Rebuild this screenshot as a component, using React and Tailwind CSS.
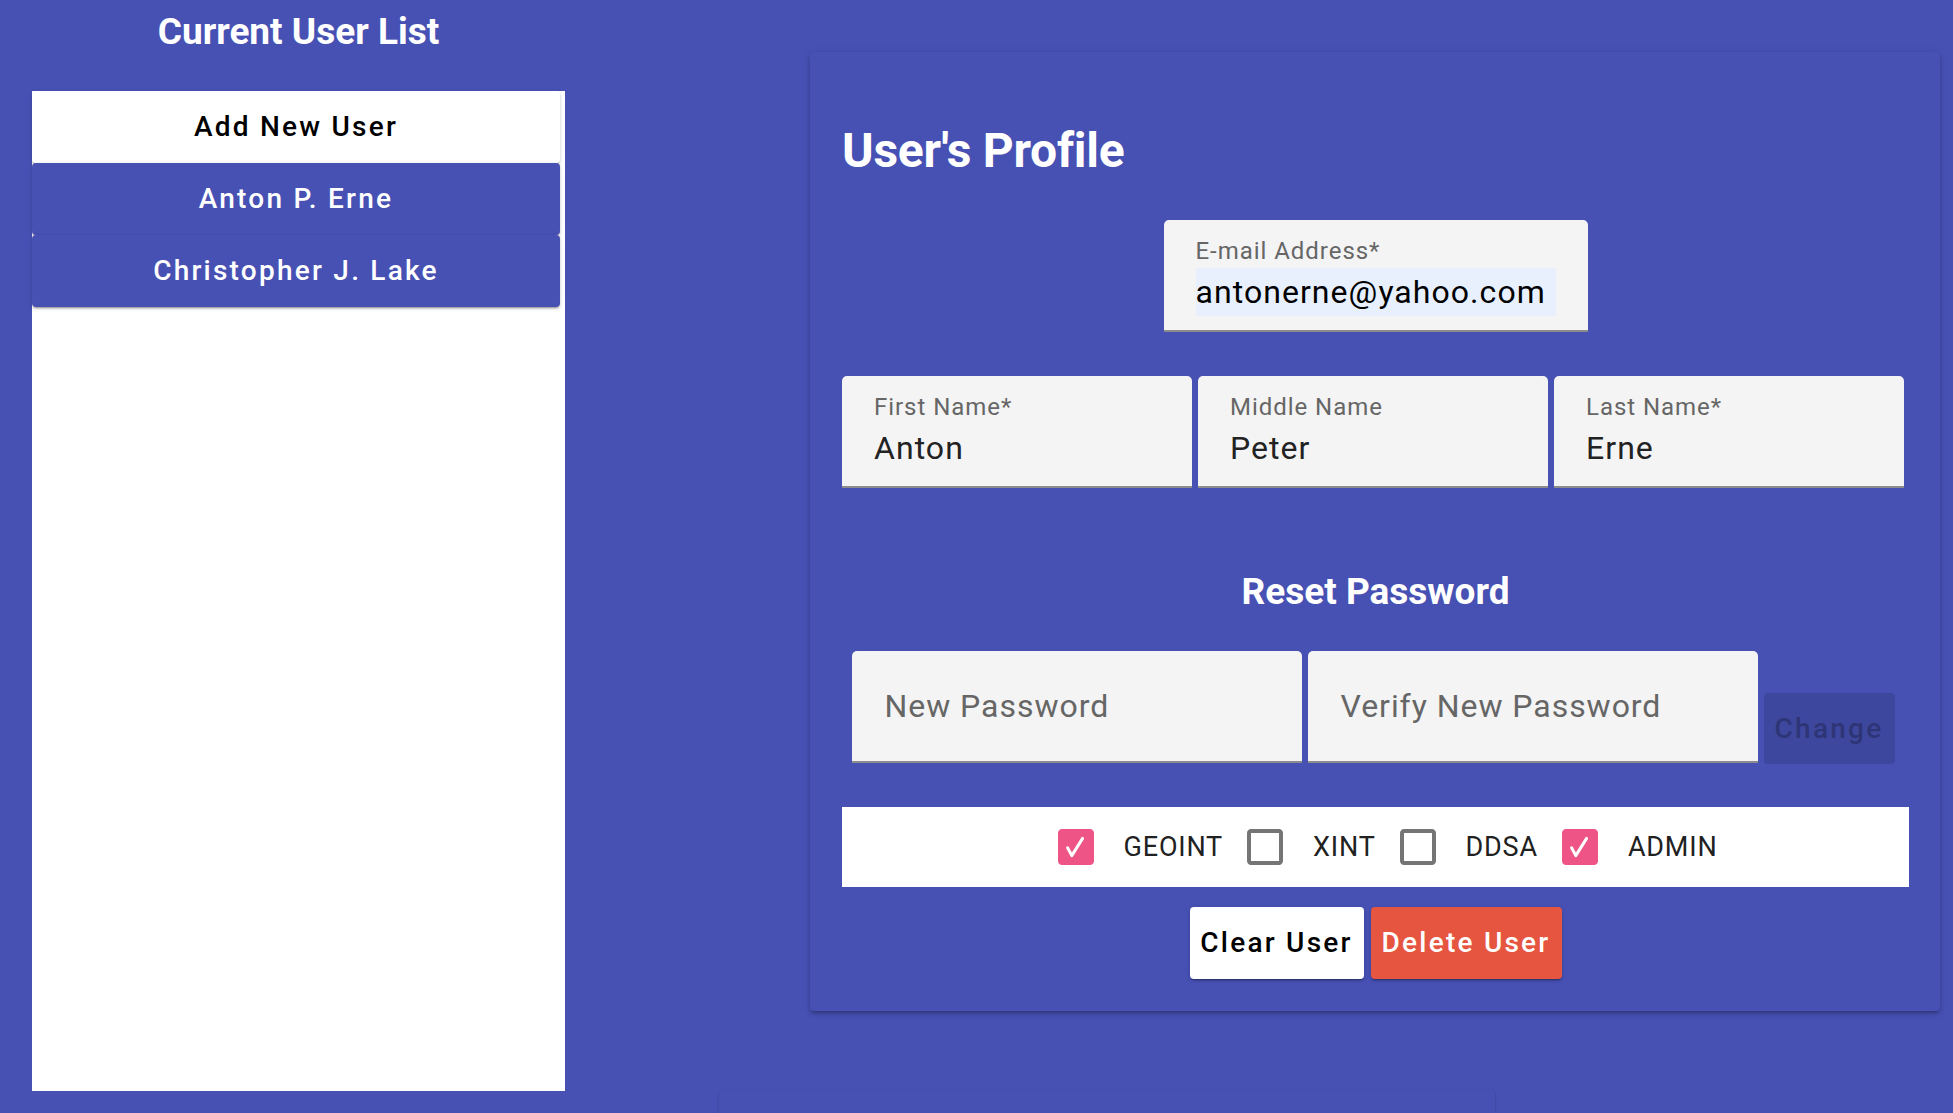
const btnShadow =
  "shadow-[0_3px_1px_-2px_rgba(0,0,0,0.2),0_2px_2px_0_rgba(0,0,0,0.14),0_1px_5px_0_rgba(0,0,0,0.12)]";

function ListButton({ children, white }) {
  return (
    <div
      className={
        (white ? "bg-white text-black " : "bg-[#4751b4] text-white ") +
        "h-[72px] w-[528px] shrink-0 rounded-[4px] flex items-center justify-center text-[28px] leading-none font-medium tracking-[0.08em] shadow-[0_3px_1px_-2px_rgba(0,0,0,0.2),0_2px_2px_0_rgba(0,0,0,0.14),0_1px_5px_0_rgba(0,0,0,0.12)]"
      }
    >
      {children}
    </div>
  );
}

function Field({ label, value, w, autofill }) {
  return (
    <div
      className={
        w +
        " h-[112px] shrink-0 bg-[#f4f4f4] rounded-t-[5px] border-b-2 border-[#8c8c8c] px-[32px] pt-[19px]"
      }
    >
      <div className="text-[24px] leading-none text-[#666666] tracking-[0.04em] whitespace-nowrap">
        {label}
      </div>
      <div
        className={
          (autofill ? "bg-[#e8f0fe] text-black " : "text-[#222222] ") +
          "mt-[5px] h-[48px] flex items-center text-[32px] leading-none tracking-[0.033em] whitespace-nowrap"
        }
      >
        {value}
      </div>
    </div>
  );
}

function PwField({ placeholder }) {
  return (
    <div className="w-[450px] h-[112px] shrink-0 bg-[#f4f4f4] rounded-t-[5px] border-b-2 border-[#8c8c8c] pl-[33px] flex items-center">
      <span className="text-[32px] leading-none text-[#666666] tracking-[0.03em] whitespace-nowrap">
        {placeholder}
      </span>
    </div>
  );
}

function Check({ checked }) {
  return checked ? (
    <svg width="48" height="48" viewBox="0 0 24 24" className="shrink-0">
      <path
        fill="#ef5487"
        d="M19 3H5c-1.11 0-2 .9-2 2v14c0 1.1.89 2 2 2h14c1.11 0 2-.9 2-2V5c0-1.1-.89-2-2-2z"
      />
      <path
        fill="none"
        stroke="#ffffff"
        strokeWidth="1.5"
        strokeLinecap="round"
        strokeLinejoin="round"
        d="M7.8 12.4l2.1 3.9 5.4-8.6"
      />
    </svg>
  ) : (
    <svg width="48" height="48" viewBox="0 0 24 24" className="shrink-0">
      <path
        fill="#757575"
        d="M19 5v14H5V5h14m0-2H5c-1.1 0-2 .9-2 2v14c0 1.1.9 2 2 2h14c1.1 0 2-.9 2-2V5c0-1.1-.9-2-2-2z"
      />
    </svg>
  );
}

function CheckItem({ checked, label, last }) {
  return (
    <div className={"flex items-center" + (last ? "" : " mr-[18px]")}>
      <Check checked={checked} />
      <span className="ml-[24px] text-[27px] leading-none text-[#212121] tracking-[0.03em]">
        {label}
      </span>
    </div>
  );
}

export default function App() {
  return (
    <div className="h-[1113px] w-[1953px] overflow-hidden bg-[#4751b4] font-['Roboto',sans-serif] flex items-start">
      {/* Left column */}
      <div className="ml-[32px] w-[533px] shrink-0 flex flex-col">
        <h1 className="mt-[13px] text-center text-[37px] leading-none font-bold text-white whitespace-nowrap">
          Current User List
        </h1>
        <div className="mt-[41px] h-[1000px] bg-white flex flex-col">
          <ListButton white>Add New User</ListButton>
          <ListButton>Anton P. Erne</ListButton>
          <ListButton>Christopher J. Lake</ListButton>
        </div>
      </div>

      {/* Right column */}
      <div className="ml-[245px] shrink-0 flex flex-col">
        <div className="mt-[52px] w-[1130px] rounded-[4px] bg-[#4751b4] pl-[32px] pr-[31px] pb-[32px] flex flex-col shadow-[0_3px_3px_-2px_rgba(0,0,0,0.2),0_3px_4px_0_rgba(0,0,0,0.14),0_1px_8px_0_rgba(0,0,0,0.12)]">
          <h2 className="mt-[75px] text-[48px] leading-none font-bold text-white tracking-[-0.005em] whitespace-nowrap">
            User's Profile
          </h2>

          <div className="mt-[45px] flex justify-center">
            <Field
              w="w-[424px]"
              label="E-mail Address*"
              value="antonerne@yahoo.com"
              autofill
            />
          </div>

          <div className="mt-[44px] flex gap-[6px]">
            <Field w="w-[350px]" label="First Name*" value="Anton" />
            <Field w="w-[350px]" label="Middle Name" value="Peter" />
            <Field w="w-[350px]" label="Last Name*" value="Erne" />
          </div>

          <h3 className="mt-[85px] text-center text-[37px] leading-none font-bold text-white whitespace-nowrap">
            Reset Password
          </h3>

          <div className="mt-[41px] flex justify-center items-end pr-[5px]">
            <PwField placeholder="New Password" />
            <div className="ml-[6px]">
              <PwField placeholder="Verify New Password" />
            </div>
            <div className="ml-[6px] mb-[-1px] h-[71px] w-[131px] rounded-[4px] bg-[#3e479e] flex items-center justify-center text-[28px] leading-none font-medium tracking-[0.08em] text-[#2e3576]">
              Change
            </div>
          </div>

          <div className="mt-[44px] h-[80px] bg-white flex items-center justify-center pl-[18px]">
            <CheckItem checked label="GEOINT" />
            <CheckItem label="XINT" />
            <CheckItem label="DDSA" />
            <CheckItem checked label="ADMIN" last />
          </div>

          <div className="mt-[20px] flex justify-center gap-[7px]">
            <div className={"h-[72px] w-[174px] rounded-[4px] bg-white text-black flex items-center justify-center text-[28px] leading-none font-medium tracking-[0.08em] " + btnShadow}>
              Clear User
            </div>
            <div className={"h-[72px] w-[191px] rounded-[4px] bg-[#e65540] text-white flex items-center justify-center text-[28px] leading-none font-medium tracking-[0.08em] " + btnShadow}>
              Delete User
            </div>
          </div>
        </div>

        <div className="ml-[-91px] mt-[79px] h-[80px] w-[776px] rounded-[4px] bg-[#4751b4] shadow-[0_1px_3px_0_rgba(0,0,0,0.2),0_1px_1px_0_rgba(0,0,0,0.14),0_2px_1px_-1px_rgba(0,0,0,0.12)]" />
      </div>
    </div>
  );
}
